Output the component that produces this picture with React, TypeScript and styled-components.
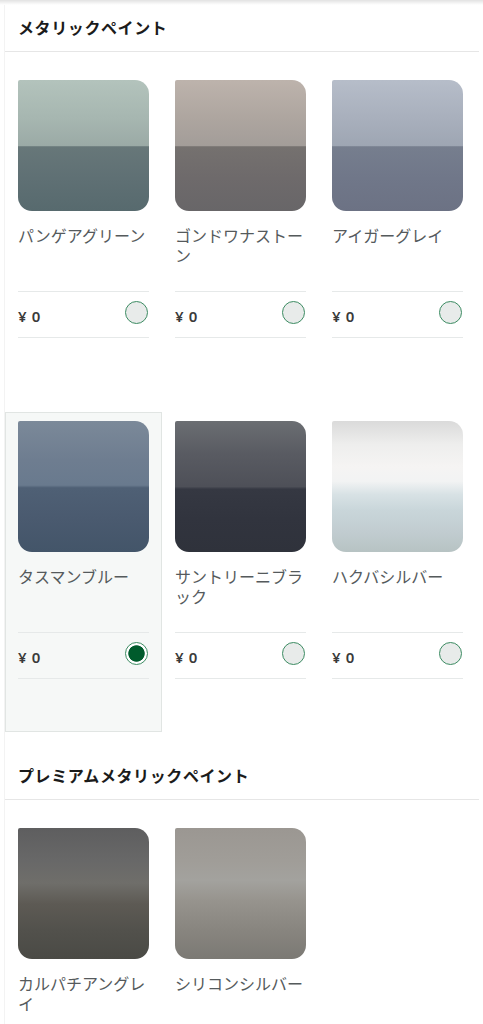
import React, { useState } from 'react';
import styled, { createGlobalStyle } from 'styled-components';

const GlobalStyle = createGlobalStyle`
  html, body {
    margin: 0;
    padding: 0;
    background: #fff;
  }
  body {
    font-family: "Noto Sans CJK JP", "Noto Sans", "Liberation Sans", sans-serif;
  }
`;

const TopShadow = styled.div`
  height: 5px;
  background: linear-gradient(#e2e2e2, #f7f7f7 70%, #fff);
`;

const Page = styled.div`
  margin-left: 4px;
  width: 475px;
  border-left: 1px solid #f3f3f3;
  box-sizing: border-box;
`;

const Section = styled.section`
  display: flex;
  flex-direction: column;
`;

const SectionTitle = styled.h2`
  margin: 0;
  height: 47px;
  box-sizing: border-box;
  padding: 0 0 3px 13px;
  display: flex;
  align-items: center;
  font-size: 16px;
  font-weight: 700;
  letter-spacing: 0.6px;
  color: #1b1b1b;
  border-bottom: 1px solid #e6e6e6;
`;

const Grid = styled.div`
  display: grid;
  grid-template-columns: repeat(3, 157px);
  row-gap: 21px;
  padding: 19px 0 21px 0;
`;

const Card = styled.div<{ selected: boolean }>`
  box-sizing: border-box;
  height: 320px;
  padding: 8px 12px 0 12px;
  display: flex;
  flex-direction: column;
  cursor: pointer;
  border: 1px solid ${({ selected }) => (selected ? '#e1e5e3' : 'transparent')};
  background: ${({ selected }) => (selected ? '#f6f8f7' : 'transparent')};
`;

const Swatch = styled.div<{ paint: string }>`
  width: 131px;
  height: 131px;
  border-radius: 2px 14px 14px 14px;
  background: ${({ paint }) => paint};
`;

const Name = styled.div`
  height: 80px;
  box-sizing: border-box;
  padding-top: 14px;
  font-size: 16px;
  line-height: 20px;
  color: #555a5c;
  word-break: break-all;
`;

const PriceRow = styled.div`
  height: 47px;
  box-sizing: border-box;
  display: flex;
  align-items: center;
  justify-content: space-between;
  border-top: 1px solid #e6e9e9;
  border-bottom: 1px solid #e6e9e9;
`;

const Price = styled.span`
  font-family: "Noto Sans", "Liberation Sans", sans-serif;
  font-size: 15px;
  font-weight: 600;
  color: #3a3a3a;
  letter-spacing: 0.6px;
  margin-top: 3px;
`;

const Radio = styled.span<{ checked: boolean }>`
  width: 23px;
  height: 23px;
  box-sizing: border-box;
  border-radius: 50%;
  border: 1.5px solid #3d8c63;
  margin-right: 1px;
  margin-top: -4px;
  background: ${({ checked }) =>
    checked
      ? 'radial-gradient(circle, #005b2c 0 7.8px, #fff 8.6px)'
      : '#e8ebea'};
`;

type Paint = { name: string; paint: string };

const metallic: Paint[] = [
  {
    name: 'パンゲアグリーン',
    paint:
      'linear-gradient(#b3c3bc 0%, #a6b6b0 30%, #9baaa6 50%, #677779 51%, #5f7074 75%, #576a6e 100%)',
  },
  {
    name: 'ゴンドワナストーン',
    paint:
      'linear-gradient(#bdb3ac 0%, #ada59f 30%, #a39d99 50%, #75716f 51%, #6e6a6b 75%, #686668 100%)',
  },
  {
    name: 'アイガーグレイ',
    paint:
      'linear-gradient(#b6bdc9 0%, #a8afbc 30%, #9ea6b3 50%, #767e8e 51%, #707789 75%, #6c7284 100%)',
  },
  {
    name: 'タスマンブルー',
    paint:
      'linear-gradient(#7b8999 0%, #6e7d90 30%, #697a8e 49%, #4f6075 51%, #4a5a6f 75%, #435569 100%)',
  },
  {
    name: 'サントリーニブラック',
    paint:
      'linear-gradient(#6b6e72 0%, #595b62 25%, #4e5058 50%, #353842 52%, #31343e 75%, #2f323b 100%)',
  },
  {
    name: 'ハクバシルバー',
    paint:
      'linear-gradient(#dadada 0%, #eeeeed 18%, #f5f4f3 35%, #f2f3f3 46%, #d8e2e5 56%, #c9d6da 68%, #c1ccd0 85%, #b7c3c3 100%)',
  },
];

const premium: Paint[] = [
  {
    name: 'カルパチアングレイ',
    paint:
      'linear-gradient(#5e5e5f 0%, #686868 25%, #6f6e6a 42%, #5d5a54 58%, #52514c 78%, #4a4a45 100%)',
  },
  {
    name: 'シリコンシルバー',
    paint:
      'linear-gradient(#9b9792 0%, #a09d98 25%, #a3a29e 40%, #97948e 55%, #88857f 78%, #7b7974 100%)',
  },
];

const PaintGrid = ({
  items,
  selected,
  onSelect,
}: {
  items: Paint[];
  selected: string;
  onSelect: (name: string) => void;
}) => (
  <Grid>
    {items.map(item => (
      <Card
        key={item.name}
        selected={selected === item.name}
        onClick={() => onSelect(item.name)}
      >
        <Swatch paint={item.paint} />
        <Name>{item.name}</Name>
        <PriceRow>
          <Price>¥ 0</Price>
          <Radio checked={selected === item.name} />
        </PriceRow>
      </Card>
    ))}
  </Grid>
);

const App = () => {
  const [selected, setSelected] = useState('タスマンブルー');

  return (
    <>
      <GlobalStyle />
      <TopShadow />
      <Page>
        <Section>
          <SectionTitle>メタリックペイント</SectionTitle>
          <PaintGrid items={metallic} selected={selected} onSelect={setSelected} />
        </Section>
        <Section>
          <SectionTitle>プレミアムメタリックペイント</SectionTitle>
          <PaintGrid items={premium} selected={selected} onSelect={setSelected} />
        </Section>
      </Page>
    </>
  );
};

export default App;
